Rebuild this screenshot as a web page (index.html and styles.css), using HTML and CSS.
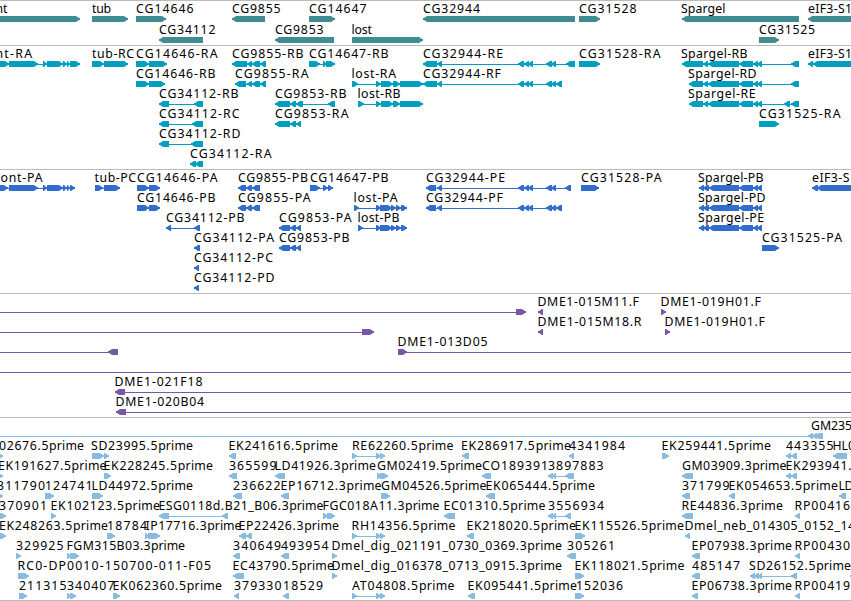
FILE: index.html
```html
<!DOCTYPE html>
<html lang="en">
<head>
  <meta charset="UTF-8">
  <title>Genome Browser</title>
  <link rel="stylesheet" href="styles.css">
</head>
<body>
  <main class="browser">
    <section class="track genes" id="genes"></section>
    <section class="track transcripts" id="transcripts"></section>
    <section class="track proteins" id="proteins"></section>
    <section class="track bacs" id="bacs"></section>
    <section class="track ests" id="ests"></section>
  </main>
  <script src="tracks.js"></script>
</body>
</html>
```
FILE: styles.css
```css
body { margin: 0; background: #fff; overflow: hidden; }
.browser { display: flex; flex-direction: column; height: 600px; border-bottom: 1px solid #bbb; }
.track { box-sizing: border-box; height: 124px; border-top: 1px solid #bbb; overflow: hidden; }
.track svg { display: block; width: 100%; height: 100%; }
.track text { font: 12.3px "Noto Sans", sans-serif; fill: #000; }
.lower { letter-spacing: -0.5px; }
.genes { height: 45px; color: #408c93; }
.transcripts { color: #009fc0; }
.proteins { color: #306dcc; }
.bacs { color: #7858a6; }
.ests { height: 183px; color: #88bbdd; }
.shape { fill: currentColor; }
```
FILE: tracks.js
```javascript
// one string per row, features separated by ";"
// feature: label | label start | label end | strand | exon ranges
const tracks = {
  genes: { step: 21, rows: [
    'nt|-4.5|7.5|>|-20:80; tub|92|111|>|92:128; CG14646|136|193.5|>|136:166; CG9855|232|280.5|<|232:265; CG14647|309|366.5|>|309:335; CG32944|423|480|<|423:575; CG31528|579|636.5|>|579:600; Spargel|681|725.5|<|682:799; eIF3-S1|808|852|<|808:870',
    'CG34112|159|215.5|<|159:203; CG9853|275|323.5|<|275:334; lost|351.5|372|>|352:423; CG31525|759|815|>|759:779'
  ]},
  transcripts: { step: 20, rows: [
    'nt-RA|-4.5|32|>|-10:9,9:38,43:47,47:63,63:67,67:70,70:80; tub-RC|92|134|>|92:104,104:128; CG14646-RA|136|217.5|>|136:149,149:167; CG9855-RB|232|303.5|<|232:247,247:252,252:260,260:266; CG14647-RB|309|388.5|>|309:320,323:327,326:335; CG32944-RE|423|503|<|423:437,437:442,518:524,524:529,528:533,546:552,551:556,566:575; CG31528-RA|579|660.5|>|579:600; Spargel-RB|681|747.5|<|682:703,703:708,708:739,739:753,753:758,757:762,791:799; eIF3-S1|808|852|<|808:813,813:870',
    'CG14646-RB|136|215.5|>|136:149,149:165; CG9855-RA|235|308.5|<|235:246,247:252,252:260,260:266; lost-RA|351.5|396|>|352:358,376:381,381:393,393:400,400:423; CG32944-RF|423|501|<|423:437,437:442,518:524,524:529,528:533,546:552,551:556,556:562; Spargel-RD|688|756.5|<|689:703,703:708,708:739,739:753,753:758,757:762,791:799',
    'CG34112-RB|159|238.5|<|159:169,194:203; CG9853-RB|275|346.5|<|275:290,290:296,296:303,328:335; lost-RB|357.5|400.5|>|358:364,376:381,381:393,393:400,400:423; Spargel-RE|688|755.5|<|689:703,703:708,708:739,739:753,753:758,757:762,784:790,791:799',
    'CG34112-RC|159|239.5|<|159:169,192:203; CG9853-RA|275|348.5|<|275:290,290:296,296:301; CG31525-RA|759|840.5|>|759:779',
    'CG34112-RD|159|240.5|<|159:169,191:203',
    'CG34112-RA|190|271.5|<|190:196,195:203'
  ]},
  proteins: { step: 20, rows: [
    'ont-PA|0.5|42.5|>|-10:8,9:38,43:47,47:63,63:67,67:70,70:75; tub-PC|94.5|136|>|95:103,104:120; CG14646-PA|137|217.5|>|137:149,149:160; CG9855-PB|238|308|<|238:246,246:252,252:260; CG14647-PB|310|388.5|>|310:320,323:328,328:333; CG32944-PE|426|505|<|426:436,437:442,518:524,524:529,528:533,546:552,551:556,565:571; CG31528-PA|581|661.5|>|581:599; Spargel-PB|698|763.5|<|699:704,703:709,709:739,739:753,753:758,757:762; eIF3-S|812|849.5|<|812:818,817:870',
    'CG14646-PB|137|215.5|>|137:149,149:160; CG9855-PA|238|310.5|<|238:246,246:252,252:260; lost-PA|353.5|397.5|>|354:359,376:381,380:392,391:396,396:401,401:407; CG32944-PF|426|503|<|426:436,437:442,518:524,524:529,528:533,546:552,551:556,556:562; Spargel-PD|698|765.5|<|699:704,703:709,709:739,739:753,753:758,757:762',
    'CG34112-PB|166|244.5|<|166:171,194:200; CG9853-PA|279|351.5|<|279:290,290:296,296:301; lost-PB|357.5|399.5|>|358:363,376:381,380:392,391:396,396:401,401:407; Spargel-PE|698|764|<|699:704,703:709,709:739,739:753,753:758,757:762',
    'CG34112-PA|194|274|<|194:200; CG9853-PB|279|349.5|<|279:290,290:296,296:301; CG31525-PA|762|842|>|762:779',
    'CG34112-PC|194|273|<|194:199',
    'CG34112-PD|194|274.5|<|194:199'
  ]},
  bacs: { step: 20, rows: [
    '|0|0|>|-20:-10,516:526; DME1-015M11.F|537.5|639|<|538:543; DME1-019H01.F|660.5|761|>|661:666',
    '|0|0|>|-20:-10,362:374; DME1-015M18.R|537.5|641.5|<|538:543; DME1-019H01.F|664.5|765|>|665:670',
    '|0|0|<|-20:-10,108:118; DME1-013D05|397.5|487.5|>|398:407,860:870',
    '|0|0|>|-20:-10,860:870',
    'DME1-021F18|114.5|202.5|<|115:125,860:870',
    'DME1-020B04|115.5|204|<|116:126,860:870'
  ]},
  ests: { step: 20, rows: [
    'GM235|811|852|<|-20:-10,808:813,812:817,815:823',
    '02676.5prime|-1|83.5|>|-5:3; SD23995.5prime|91|192.5|>|92:104,104:109; EK241616.5prime|228.5|337.5|<|229:236; RE62260.5prime|352|453|>|352:357,376:381,380:385; EK286917.5prime|461|570.5|<|462:469; 4341984|569|625|<|569:574; EK259441.5prime|661.5|770.5|>|662:669; 443355|786|833.5|<|786:791,791:797; HL0|832.5|855|<|833:847',
    'EK191627.5prime|-2|106|>|-5:3; EK228245.5prime|103.5|212.5|>|104:111; 365599|229|276.5|<|229:237; LD41926.3prime|274.5|375.5|<|275:285; GM02419.5prime|377|481.5|>|377:382,380:388; CO189391|482|548|<|482:491; 3897883|548|603.5|<|548:553,552:556,565:574; GM03909.3prime|682|786|<|682:693; EK293941.|785.5|851.5|<|786:791,791:797',
    '311790|-3|45|>|-5:3; 124741|45|92.5|>|45:54; LD44972.5prime|91.5|192.5|>|92:103; 236622|233|280.5|<|233:242; EP16712.3prime|280.5|381|<|281:289; GM04526.5prime|381|486|>|381:390; EK065444.5prime|485.5|594.5|<|486:495; 371799|682|729.5|<|682:690; EK054653.5prime|728.5|837.5|<|729:735; LD|838.5|853.5|<|839:846',
    '370901|-1|47|>|-5:6; EK102123.5prime|50.5|159.5|>|51:56; ESG0118d.B21_B06.3prime|158.5|323|<|159:169,222:228; FGC018A11.3prime|322.5|439|>|323:328,327:335; EC01310.5prime|443.5|545|<|444:455; 3556934|548|604|<|548:553,552:556,565:571; RE44836.3prime|681.5|782.5|<|682:693; RP00416|794.5|850|<|795:800',
    'EK248263.5prime|-1|107.5|>|-5:6; 18784|107|147|>|107:115; IP17716.3prime|145.5|241|>|145:149,148:160; EP22426.3prime|238.5|338.5|<|239:246,246:252; RH14356.5prime|351.5|455|>|352:357,376:381,380:385; EK218020.5prime|466.5|575.5|<|467:474; EK115526.5prime|574.5|683.5|>|575:585; Dmel_neb_014305_0152_14|684.5|855|<|685:690',
    '329925|16|63.5|>|16:21; FGM315B03.3prime|66.5|184.5|>|67:71,70:79; 340649|233|281|<|233:240; 493954|281|328.5|<|281:289; Dmel_dig_021191_0730_0369.3prime|331.5|561.5|>|332:337; 305261|567|615|<|567:576; EP07938.3prime|691.5|791.5|<|692:700; RP00430|794.5|850|<|795:800',
    'RC0-DP0010-150700-011-F05|17.5|211|>|18:29; EC43790.5prime|232.5|333.5|<|233:244; Dmel_dig_016378_0713_0915.3prime|331.5|561.5|>|332:337; EK118021.5prime|574.5|684|>|575:584; 485147|692|740|<|692:700; SD26152.5prime|749|850.5|<|750:755,754:759,758:762,791:797; |0|0|<|850:856',
    '211315|19|66.5|>|19:27; 340407|67|114.5|>|67:71,70:76; EK062360.5prime|112.5|221.5|>|113:120; 379330|234|281.5|<|234:239; 18529|283|323|<|283:289; AT04808.5prime|352|454|>|352:357,376:381,380:385; EK095441.5prime|467.5|576.5|<|468:475; 152036|576|623|>|575:584; EP06738.3prime|691.5|791.5|<|692:698; RP00419|794.5|850|<|795:800'
  ]}
};

// exon block, 6px high, with a pointed end on the strand side
function exon(a, b, strand, y) {
  const tip = Math.min(5, b - a);
  if (strand === '>') {
    return `M${a} ${y}H${b - tip + 1}L${b - 1} ${y + 2}H${b}V${y + 4}H${b - 1}L${b - tip + 1} ${y + 6}H${a}Z`;
  }
  return `M${b} ${y}H${a + tip - 1}L${a + 1} ${y + 2}H${a}V${y + 4}H${a + 1}L${a + tip - 1} ${y + 6}H${b}Z`;
}

for (const id in tracks) {
  const { step, rows } = tracks[id];
  let out = '';
  rows.forEach((row, i) => {
    // the svg starts under the 1px border of the track
    const y = i * step - 1;
    row.split(';').forEach(item => {
      const [label, x, end, strand, ranges] = item.trim().split('|');
      const exons = ranges.split(',').map(r => r.split(':').map(Number));
      const first = exons[0][0];
      const last = exons[exons.length - 1][1];
      if (exons.length > 1) {
        out += `<rect class="shape" x="${first + 1}" y="${y + 19}" width="${last - first - 2}" height="1"/>`;
      }
      out += `<path class="shape" d="${exons.map(e => exon(e[0], e[1], strand, y + 16)).join('')}"/>`;
      if (label) {
        const name = label.replace('prime', '<tspan class="lower">prime</tspan>');
        out += `<text x="${x}" y="${y + 13}" textLength="${end - x}">${name}</text>`;
      }
    });
  });
  document.getElementById(id).innerHTML = `<svg>${out}</svg>`;
}
```
